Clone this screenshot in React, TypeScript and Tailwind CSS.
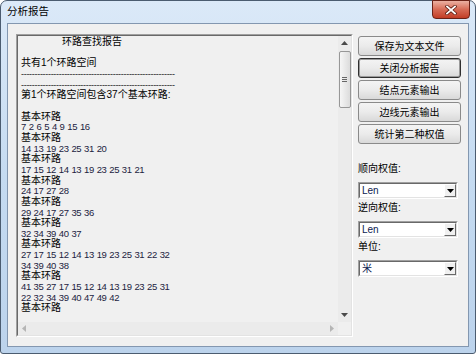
import React from 'react';

type Line = { t: string; kind: 'title' | 'cn' | 'num' | 'dash' | 'blank' };

const REPORT: Line[] = [
  { t: '环路查找报告', kind: 'title' },
  { t: '', kind: 'blank' },
  { t: '共有1个环路空间', kind: 'cn' },
  { t: '-'.repeat(57), kind: 'dash' },
  { t: '-'.repeat(57), kind: 'dash' },
  { t: '第1个环路空间包含37个基本环路:', kind: 'cn' },
  { t: '', kind: 'blank' },
  { t: '基本环路', kind: 'cn' },
  { t: '7 2 6 5 4 9 15 16', kind: 'num' },
  { t: '基本环路', kind: 'cn' },
  { t: '14 13 19 23 25 31 20', kind: 'num' },
  { t: '基本环路', kind: 'cn' },
  { t: '17 15 12 14 13 19 23 25 31 21', kind: 'num' },
  { t: '基本环路', kind: 'cn' },
  { t: '24 17 27 28', kind: 'num' },
  { t: '基本环路', kind: 'cn' },
  { t: '29 24 17 27 35 36', kind: 'num' },
  { t: '基本环路', kind: 'cn' },
  { t: '32 34 39 40 37', kind: 'num' },
  { t: '基本环路', kind: 'cn' },
  { t: '27 17 15 12 14 13 19 23 25 31 22 32', kind: 'num' },
  { t: '34 39 40 38', kind: 'num' },
  { t: '基本环路', kind: 'cn' },
  { t: '41 35 27 17 15 12 14 13 19 23 25 31', kind: 'num' },
  { t: '22 32 34 39 40 47 49 42', kind: 'num' },
  { t: '基本环路', kind: 'cn' },
];

const BUTTONS = ['保存为文本文件', '关闭分析报告', '结点元素输出', '边线元素输出', '统计第二种权值'];

const FONT = "font-['Liberation_Sans','Noto_Sans_CJK_SC',sans-serif]";

function Arrow({ dir, color }: { dir: 'up' | 'down' | 'left' | 'right'; color: string }) {
  const pts = {
    up: '0,4 3.5,0 7,4',
    down: '0,0 3.5,4 7,0',
    left: '4,0 0,3.5 4,7',
    right: '0,0 4,3.5 0,7',
  }[dir];
  const vertical = dir === 'up' || dir === 'down';
  return (
    <svg width={vertical ? 7 : 4} height={vertical ? 4 : 7} viewBox={vertical ? '0 0 7 4' : '0 0 4 7'}>
      <polygon points={pts} fill={color} />
    </svg>
  );
}

function ReportBox() {
  return (
    <div className="w-[337px] h-[303px] border border-t-[#a0a0a0] border-l-[#a0a0a0] border-r-white border-b-white">
      <div className="w-full h-full border border-t-[#696969] border-l-[#696969] border-r-[#e3e3e3] border-b-[#e3e3e3] flex flex-col bg-[#f0f0f0]">
        <div className="flex flex-1 min-h-0">
          {/* text */}
          <div className="flex-1 overflow-hidden pl-[3px] pt-[1px]">
            {REPORT.map((l, i) => {
              if (l.kind === 'blank') return <div key={i} className="h-[10.67px]" />;
              if (l.kind === 'dash')
                return (
                  <div key={i} className="h-[10.67px] leading-[10.67px] whitespace-pre text-[9px] tracking-[-0.3px] text-[#222]">
                    {l.t}
                  </div>
                );
              if (l.kind === 'num')
                return (
                  <div key={i} className="h-[10.67px] leading-[10.67px] whitespace-pre text-[9.5px] tracking-[-0.4px] [word-spacing:0.6px] text-[#1c2340]">
                    {l.t}
                  </div>
                );
              return (
                <div
                  key={i}
                  className={`h-[10.67px] leading-[10.67px] whitespace-pre text-[10px] text-black ${l.kind === 'title' ? 'pl-[41px]' : ''}`}
                >
                  {l.t}
                </div>
              );
            })}
          </div>
          {/* vertical scrollbar */}
          <div className="w-[13px] bg-[#ebebeb] flex flex-col">
            <div className="h-[14px] flex items-center justify-center">
              <Arrow dir="up" color="#4a4a4a" />
            </div>
            <div className="mt-[1px] mx-auto w-[12px] h-[57px] rounded-[2px] border border-[#979797] bg-gradient-to-r from-[#f6f6f6] to-[#dcdcdc] flex flex-col items-center justify-center gap-[1px]">
              <div className="w-[5px] h-px bg-[#666]" />
              <div className="w-[5px] h-px bg-[#666]" />
              <div className="w-[5px] h-px bg-[#666]" />
            </div>
            <div className="flex-1" />
            <div className="h-[14px] flex items-center justify-center">
              <Arrow dir="down" color="#4a4a4a" />
            </div>
          </div>
        </div>
        {/* horizontal scrollbar */}
        <div className="h-[13px] flex">
          <div className="flex-1 bg-[#ebebeb] flex items-center justify-between px-[4px]">
            <Arrow dir="left" color="#b5b5b5" />
            <Arrow dir="right" color="#b5b5b5" />
          </div>
          <div className="w-[13px] bg-[#f0f0f0]" />
        </div>
      </div>
    </div>
  );
}

function Combo({ value }: { value: string }) {
  return (
    <div className="w-[100px] h-[17px] border border-t-[#a0a0a0] border-l-[#a0a0a0] border-r-white border-b-white">
      <div className="w-full h-full border border-t-[#696969] border-l-[#696969] border-r-[#e3e3e3] border-b-[#e3e3e3] bg-white flex items-center">
        <span className="flex-1 pl-[2px] leading-none text-[10px] text-[#0c1a50]">{value}</span>
        <div className="w-[12px] h-[13px] bg-[#f0f0f0] border border-t-white border-l-white border-r-[#696969] border-b-[#696969] flex items-center justify-center">
          <Arrow dir="down" color="#000" />
        </div>
      </div>
    </div>
  );
}

export default function App() {
  return (
    <div className={`w-[476px] h-[354px] relative rounded-t-[7px] rounded-b-[3px] border border-[#4b5c70] bg-gradient-to-b from-[#dbe9f8] via-[#c5dbf1] to-[#bcd3ec] flex flex-col ${FONT}`}>
      {/* title bar */}
      <div className="h-[22px] flex items-center pl-[6px]">
        <span className="text-[10.5px] text-black">分析报告</span>
      </div>
      <div className="absolute right-[5px] top-[-1px] w-[38px] h-[19px] rounded-b-[4px] border border-[#6a2217] bg-gradient-to-b from-[#eab0a2] via-[#d66a55] to-[#c23c25] flex items-center justify-center">
        <svg width="12" height="10" viewBox="0 0 12 10">
          <path d="M2 1.5 L10 8.5 M10 1.5 L2 8.5" stroke="#5b1a10" strokeWidth="3.4" strokeLinecap="square" />
          <path d="M2 1.5 L10 8.5 M10 1.5 L2 8.5" stroke="#fff" strokeWidth="1.8" strokeLinecap="square" />
        </svg>
      </div>

      {/* client area */}
      <div className="flex-1 mx-[6px] mb-[6px] border border-[#8397b0] bg-[#f0f0f0] flex pl-[8px] pt-[10px]">
        <ReportBox />
        <div className="ml-[5px] w-[103px] pt-[2px] flex flex-col">
          <div className="flex flex-col gap-[2px]">
            {BUTTONS.map((b, i) => (
              <div
                key={b}
                className={`h-[20px] rounded-[3px] border flex items-center justify-center text-[10px] text-black bg-gradient-to-b from-[#f4f4f4] via-[#ebebeb] to-[#d9d9d9] ${
                  i === 1 ? 'border-[#2f2f2f] shadow-[inset_0_0_0_1px_#9a9a9a]' : 'border-[#8a8a8a]'
                }`}
              >
                {b}
              </div>
            ))}
          </div>
          <div className="mt-[19px] text-[10px] leading-[12px] text-black">顺向权值:</div>
          <div className="mt-[7px]"><Combo value="Len" /></div>
          <div className="mt-[3px] text-[10px] leading-[12px] text-black">逆向权值:</div>
          <div className="mt-[7px]"><Combo value="Len" /></div>
          <div className="mt-[3px] text-[10px] leading-[12px] text-black">单位:</div>
          <div className="mt-[7px]"><Combo value="米" /></div>
        </div>
      </div>
    </div>
  );
}
